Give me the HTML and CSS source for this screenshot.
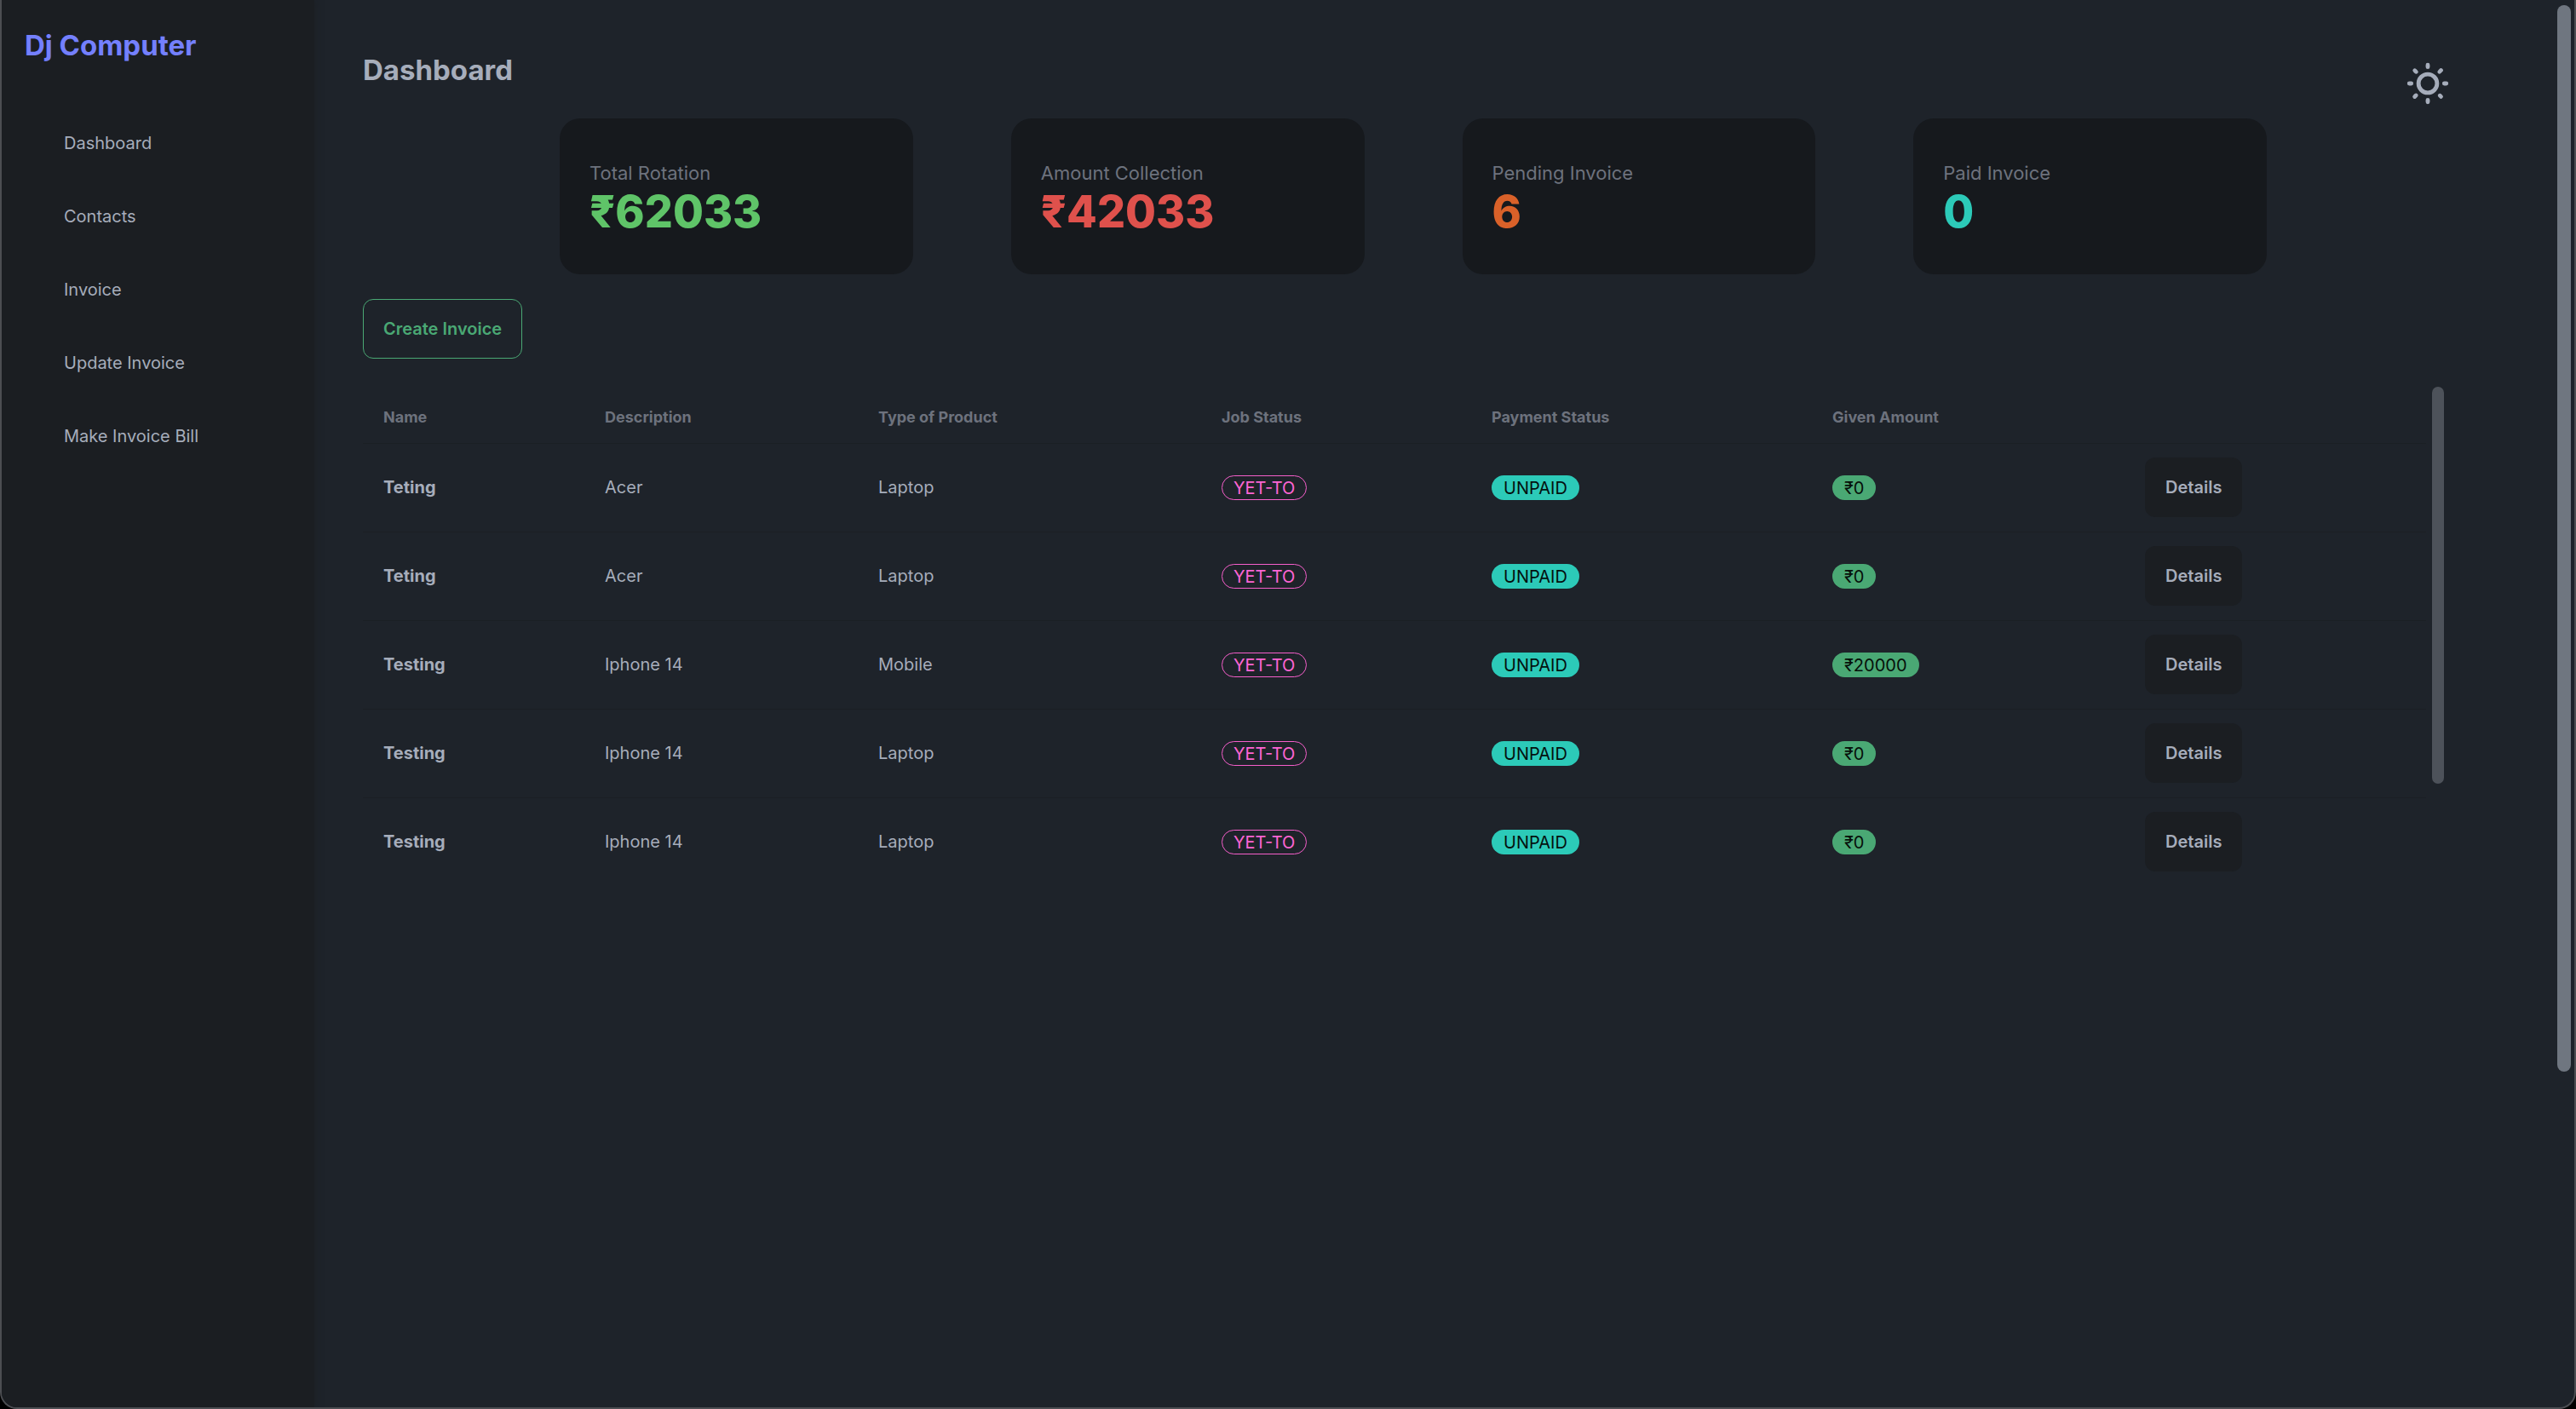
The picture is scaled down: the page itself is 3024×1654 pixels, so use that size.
FILE: index.html
```html
<!DOCTYPE html>
<html lang="en">
<head>
  <meta charset="utf-8">
  <meta name="viewport" content="width=device-width, initial-scale=1">
  <title>Dj Computer – Dashboard</title>
  <link rel="stylesheet" href="styles.css">
</head>
<body>
  <div class="window">
    <aside class="sidebar">
      <a class="brand" href="#">Dj Computer</a>
      <nav class="menu" aria-label="Main">
        <a href="#">Dashboard</a>
        <a href="#">Contacts</a>
        <a href="#">Invoice</a>
        <a href="#">Update Invoice</a>
        <a href="#">Make Invoice Bill</a>
      </nav>
    </aside>

    <main class="main">
      <header class="header">
        <h1>Dashboard</h1>
        <button class="theme-toggle" type="button" aria-label="Toggle theme">
          <svg viewBox="0 0 24 24" aria-hidden="true"><path d="M5.64,17l-.71.71a1,1,0,0,0,0,1.41,1,1,0,0,0,1.41,0l.71-.71A1,1,0,0,0,5.64,17ZM5,12a1,1,0,0,0-1-1H3a1,1,0,0,0,0,2H4A1,1,0,0,0,5,12Zm7-7a1,1,0,0,0,1-1V3a1,1,0,0,0-2,0V4A1,1,0,0,0,12,5ZM5.64,7.05a1,1,0,0,0,.7.29,1,1,0,0,0,.71-.29,1,1,0,0,0,0-1.41l-.71-.71A1,1,0,0,0,4.93,6.34Zm12,.29a1,1,0,0,0,.7-.29l.71-.71a1,1,0,1,0-1.41-1.41L17,5.64a1,1,0,0,0,0,1.41A1,1,0,0,0,17.66,7.34ZM21,11H20a1,1,0,0,0,0,2h1a1,1,0,0,0,0-2Zm-9,8a1,1,0,0,0-1,1v1a1,1,0,0,0,2,0V20A1,1,0,0,0,12,19ZM18.36,17A1,1,0,0,0,17,18.36l.71.71a1,1,0,0,0,1.41,0,1,1,0,0,0,0-1.41ZM12,6.5A5.5,5.5,0,1,0,17.5,12,5.51,5.51,0,0,0,12,6.5Zm0,9A3.5,3.5,0,1,1,15.5,12,3.5,3.5,0,0,1,12,15.5Z"/></svg>
        </button>
      </header>

      <section class="stats" aria-label="Totals">
        <div class="stat">
          <div class="stat-title">Total Rotation</div>
          <div class="stat-value green">₹62033</div>
        </div>
        <div class="stat">
          <div class="stat-title">Amount Collection</div>
          <div class="stat-value red">₹42033</div>
        </div>
        <div class="stat">
          <div class="stat-title">Pending Invoice</div>
          <div class="stat-value orange">6</div>
        </div>
        <div class="stat">
          <div class="stat-title">Paid Invoice</div>
          <div class="stat-value teal">0</div>
        </div>
      </section>

      <button class="create" type="button">Create Invoice</button>

      <div class="table-wrap">
        <table class="invoices">
          <colgroup>
            <col class="c-name"><col class="c-desc"><col class="c-type"><col class="c-job"><col class="c-pay"><col class="c-given"><col class="c-action">
          </colgroup>
          <thead>
            <tr><th>Name</th><th>Description</th><th>Type of Product</th><th>Job Status</th><th>Payment Status</th><th>Given Amount</th><td></td></tr>
          </thead>
          <tbody>
            <tr><th>Teting</th><td>Acer</td><td>Laptop</td><td><span class="badge job">YET-TO</span></td><td><span class="badge pay">UNPAID</span></td><td><span class="badge given">₹0</span></td><td><button class="details" type="button">Details</button></td></tr>
            <tr><th>Teting</th><td>Acer</td><td>Laptop</td><td><span class="badge job">YET-TO</span></td><td><span class="badge pay">UNPAID</span></td><td><span class="badge given">₹0</span></td><td><button class="details" type="button">Details</button></td></tr>
            <tr><th>Testing</th><td>Iphone 14</td><td>Mobile</td><td><span class="badge job">YET-TO</span></td><td><span class="badge pay">UNPAID</span></td><td><span class="badge given">₹20000</span></td><td><button class="details" type="button">Details</button></td></tr>
            <tr><th>Testing</th><td>Iphone 14</td><td>Laptop</td><td><span class="badge job">YET-TO</span></td><td><span class="badge pay">UNPAID</span></td><td><span class="badge given">₹0</span></td><td><button class="details" type="button">Details</button></td></tr>
            <tr><th>Testing</th><td>Iphone 14</td><td>Laptop</td><td><span class="badge job">YET-TO</span></td><td><span class="badge pay">UNPAID</span></td><td><span class="badge given">₹0</span></td><td><button class="details" type="button">Details</button></td></tr>
          </tbody>
        </table>
        <div class="table-scroll" aria-hidden="true"></div>
      </div>
    </main>
    <div class="page-scroll" aria-hidden="true"></div>
  </div>
</body>
</html>
```
FILE: styles.css
```css
:root {
  --base-100: #1e232a;
  --base-200: #1b1e22;
  --base-300: #16191d;
  --content: #a6adbb;
  --muted: #6d727d;
  --line: #1b1f24;
  --green: #4aa874;
  --teal: #2ccab8;
}

* {
  box-sizing: border-box;
}

body {
  margin: 0;
  background: #000;
  color: var(--content);
  font: 20px/28px Inter, "Liberation Sans", sans-serif;
}

a {
  color: inherit;
  text-decoration: none;
}

button {
  font: inherit;
  color: inherit;
  cursor: pointer;
}

.window {
  position: relative;
  display: flex;
  min-height: 100vh;
  overflow: hidden;
  background: var(--base-100);
  border: 2px solid #4c4e52;
  border-top: 0;
  border-radius: 0 0 20px 20px;
}

/* Sidebar */
.sidebar {
  flex: 0 0 367px;
  padding: 28px 0 0 27px;
  background: var(--base-200);
  box-shadow: 0 0 8px rgba(27, 31, 35, 0.8);
}

.brand {
  display: block;
  color: #7480ff;
  font-size: 33px;
  font-weight: 700;
  line-height: 50px;
}

.menu {
  display: flex;
  flex-direction: column;
  gap: 28px;
  padding: 61px 24px 0 22px;
}

.menu a {
  padding: 15px 24px;
}

/* Main column */
.main {
  flex: 1;
  min-width: 0;
  padding: 57px 143px 56px 57px;
}

.header {
  display: flex;
  justify-content: space-between;
}

h1 {
  margin: 0;
  font-size: 33px;
  font-weight: 700;
  line-height: 50px;
}

.theme-toggle {
  margin-top: 12px;
  padding: 0;
  background: none;
  border: 0;
}

.theme-toggle svg {
  display: block;
  width: 58px;
  height: 58px;
  fill: currentColor;
}

.stats {
  display: grid;
  grid-template-columns: repeat(4, 1fr);
  gap: 115px;
  margin-top: 12px;
  padding: 0 218px 0 231px;
}

.stat {
  padding: 47px 35px 44px;
  background: var(--base-300);
  border-radius: 24px;
}

.stat-title {
  color: var(--muted);
  font-size: 22px;
  line-height: 34px;
}

.stat-value {
  font-size: 52px;
  font-weight: 800;
  line-height: 58px;
}

.green { color: #5fc468; }
.red { color: #df514c; }
.orange { color: #d96129; }
.teal { color: var(--teal); }

.create {
  display: block;
  height: 70px;
  margin: 29px 0 33px;
  padding: 0 23px;
  background: none;
  border: 1px solid var(--green);
  border-radius: 12px;
  color: var(--green);
  font-weight: 600;
}

/* Invoice table */
.table-wrap {
  display: flex;
  gap: 7px;
  padding-right: 10px;
}

.invoices {
  flex: 1;
  table-layout: fixed;
  border-collapse: collapse;
}

.c-name { width: 260px; }
.c-desc { width: 321px; }
.c-type { width: 403px; }
.c-job { width: 317px; }
.c-pay { width: 400px; }
.c-given { width: 367px; }
.c-action { width: 354px; }

.invoices th,
.invoices td {
  padding: 0 24px;
  text-align: left;
  vertical-align: middle;
}

.invoices thead tr {
  height: 66px;
  border-bottom: 1px solid var(--line);
  color: var(--muted);
  font-size: 18px;
}

.invoices thead th {
  padding-top: 7px;
}

.invoices tbody tr {
  height: 104px;
  border-bottom: 1px solid var(--line);
}

.invoices tbody tr:last-child {
  border-bottom: 0;
}

.badge {
  display: inline-flex;
  align-items: center;
  height: 29px;
  padding: 0 13px;
  border: 1px solid transparent;
  border-radius: 15px;
  vertical-align: middle;
}

.job {
  border-color: #f65fcb;
  color: #ff65d4;
}

.pay {
  background: var(--teal);
  color: #04110f;
}

.given {
  background: var(--green);
  color: #06100a;
}

.details {
  height: 70px;
  padding: 0 24px;
  background: var(--base-200);
  border: 0;
  border-radius: 12px;
  font-weight: 600;
  vertical-align: middle;
}

.table-scroll {
  flex: 0 0 14px;
  height: 466px;
  background: #4d525a;
  border-radius: 7px;
}

/* Page scrollbar, floating over the right edge */
.page-scroll {
  position: absolute;
  top: 6px;
  right: 4px;
  width: 16px;
  height: calc(76% - 4px);
  background: #6f7680;
  border-radius: 8px;
}
```
